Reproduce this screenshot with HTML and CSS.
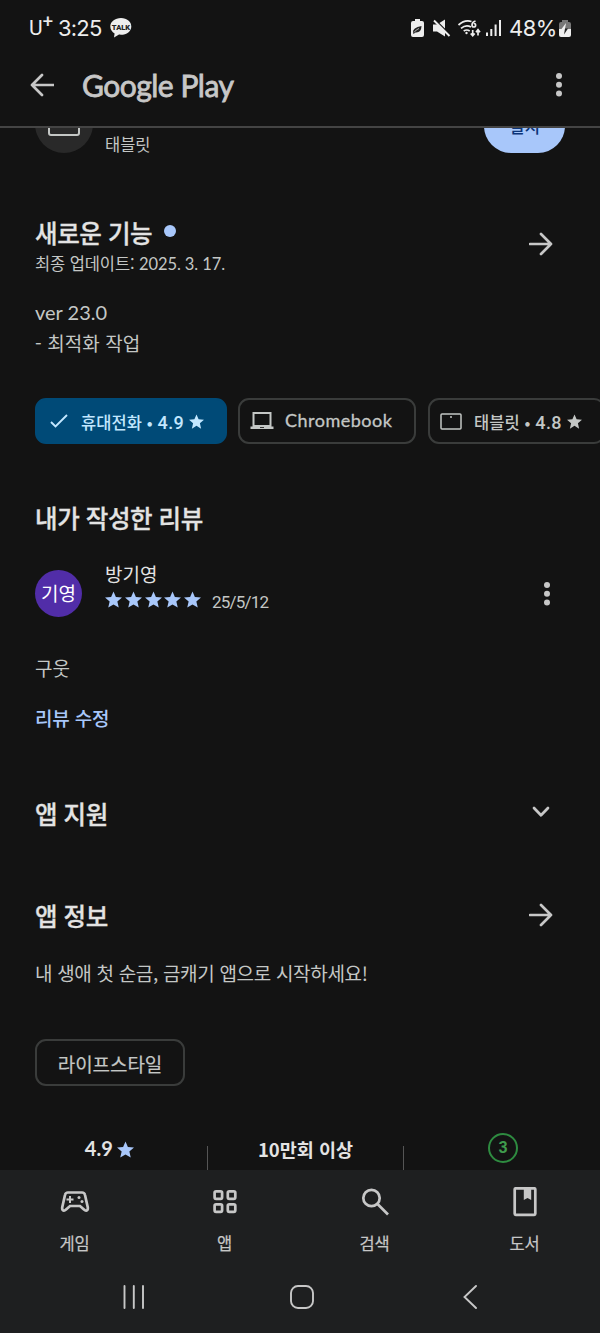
FILE: index.html
```html
<!DOCTYPE html>
<html lang="ko">
<head>
<meta charset="utf-8">
<title>Google Play</title>
<link rel="stylesheet" href="styles.css">
</head>
<body>
<svg width="0" height="0" class="defs"><defs><symbol id="star" viewBox="2 2 20 19"><path d="M12 17.27 18.18 21l-1.64-7.03L22 9.24l-7.19-.61L12 2 9.19 8.63 2 9.24l5.46 4.73L5.82 21z"/></symbol></defs></svg>
<div class="screen">
  <div class="status">
    <span class="carrier">U<sup>+</sup></span><span class="clock">3:25</span>
    <svg class="talk" width="22" height="20" viewBox="0 0 22 20"><path d="M11 0C5 0 .3 3.6.3 8.4c0 3 1.800 5.500 4.300 7L4 19.400l5-2.800c7 .800 12.300-3 12.300-8.200C21.300 3.600 17 0 11 0z" fill="#eee"/><text x="11" y="11.500" text-anchor="middle" class="talk-text">TALK</text></svg>
    <svg class="sys" width="98" height="24" viewBox="410 16 98 24" fill="#ededed">
      <path d="M415 19h5v2h2q2 0 2 2v12q0 2-2 2h-9q-2 0-2-2V23q0-2 2-2h2z"/>
      <path d="M413 32.500q-.5-5 8.500-6.500-.2 7-6 6.500l-2 1.500z" fill="#222"/><path d="M414 32.500q2-3 5-4" fill="none" stroke="#ededed" stroke-width=".7"/>
      <path d="M433 24.500h4l8-5v17l-8-5h-4z"/>
      <path d="M433 18 451 36" stroke="#131313" stroke-width="2"/><path d="m434 20.500 15.500 15.500" stroke="#ededed" stroke-width="1.900"/>
      <g fill="none" stroke="#ededed" stroke-width="1.700"><path d="M458.500 25q6-5.500 13-3.500M461 28.300q5-4 10-1.300M463.700 31q3.200-2 6 0"/><path d="M475.500 21q-3.500 1-3.500 4 0 2 1.800 2t1.800-1.800-1.800-1.700M472.700 30v5.500m-2-2 2 2.300 2-2.300M478 35.500V30m-2 2.200 2-2.500 2 2.500"/></g><circle cx="466.500" cy="33" r="1.200"/>
      <path d="M486 32.500h2V36h-2zM490.300 29h2v7h-2zM494.600 24.500h2V36h-2zM499 20h2v16h-2z"/>
    </svg>
    <span class="percent">48%</span>
    <svg class="battery" width="12" height="18" viewBox="0 0 12 18"><path d="M3 1h6v2h1q2 0 2 2v6H0V5q0-2 2-2h1z" fill="#777"/><path d="M0 10h12v6q0 2-2 2H2q-2 0-2-2z" fill="#eee"/><path d="M7 4 2.500 10H6z" fill="#eee"/><path d="m5 15.500 4-6H6z" fill="#222"/></svg>
  </div>
  <header class="topbar">
    <svg class="ico" width="24" height="24" viewBox="0 0 24 24"><path d="M12 2 2 12l10 10M2 12h21.500"/></svg>
    <h1>Google Play</h1>
    <svg class="dots" width="8" height="26" viewBox="0 0 8 26"><circle cx="4" cy="4" r="3"/><circle cx="4" cy="12.700" r="3"/><circle cx="4" cy="21.400" r="3"/></svg>
  </header>
  <main>
    <div class="device">
      <div class="device-ico"><svg width="32" height="24" viewBox="0 0 32 24"><rect x="1" y="1" width="30" height="22" rx="2" fill="none" stroke="#c4c7c5" stroke-width="2"/></svg></div>
      <span class="device-name">태블릿</span>
      <button class="install">설치</button>
    </div>
    <section class="news">
      <div class="news-head"><h2>새로운 기능</h2><i class="blue-dot"></i><svg class="ico end" width="24" height="24" viewBox="0 0 24 24"><path d="m12 2 10 10-10 10M22 12H1"/></svg></div>
      <p class="updated">최종 업데이트: <span class="lat">2025. 3. 17.</span></p>
      <p class="ver lat">ver 23.0</p>
      <p class="body change">- 최적화 작업</p>
    </section>
    <div class="chips">
      <div class="chip selected"><svg width="18" height="14" viewBox="0 0 18 14"><path d="m1 8 4.500 4.500L17 1" fill="none" stroke="currentColor" stroke-width="1.900"/></svg><span class="chip-label phone">휴대전화 • <b>4.9</b></span><svg class="chip-star" width="15" height="15"><use href="#star"/></svg></div>
      <div class="chip chrome"><svg width="24" height="18" viewBox="0 0 24 18"><path d="M3.500 1h17v13h-17z" fill="none" stroke="currentColor" stroke-width="2"/><path d="M.5 14.500h23V17H.5z" fill="currentColor"/><path d="M10 15h4v1h-4z" fill="#333"/></svg><span class="lat chromebook">Chromebook</span></div>
      <div class="chip tablet"><svg width="22" height="17" viewBox="0 0 22 17"><rect x="1" y="1" width="20" height="15" rx="1" fill="none" stroke="currentColor" stroke-width="1.500"/><circle cx="11" cy="4" r="1" fill="currentColor"/></svg><span class="chip-label tab">태블릿 • <b>4.8</b></span><svg class="chip-star" width="15" height="15"><use href="#star"/></svg></div>
    </div>
    <h2 class="my-review">내가 작성한 리뷰</h2>
    <div class="reviewer">
      <div class="avatar">기영</div>
      <div class="who">
        <div class="name">방기영</div>
        <div class="rating"><svg width="17" height="17"><use href="#star"/></svg><svg width="17" height="17"><use href="#star"/></svg><svg width="17" height="17"><use href="#star"/></svg><svg width="17" height="17"><use href="#star"/></svg><svg width="17" height="17"><use href="#star"/></svg><span class="date">25/5/12</span></div>
      </div>
      <svg class="dots" width="8" height="26" viewBox="0 0 8 26"><circle cx="4" cy="4" r="3"/><circle cx="4" cy="12.700" r="3"/><circle cx="4" cy="21.400" r="3"/></svg>
    </div>
    <p class="body comment">구웃</p>
    <a class="edit">리뷰 수정</a>
    <div class="row support"><h2>앱 지원</h2><svg class="ico chev" width="18" height="12" viewBox="0 0 18 12"><path d="m2 2 7 7.300L16 2"/></svg></div>
    <div class="row about"><h2>앱 정보</h2><svg class="ico" width="24" height="24" viewBox="0 0 24 24"><path d="m12 2 10 10-10 10M22 12H1"/></svg></div>
    <p class="body intro">내 생애 첫 순금, 금캐기 앱으로 시작하세요!</p>
    <div class="tag">라이프스타일</div>
    <div class="stats">
      <div class="stat score"><span class="lat">4.9</span><svg width="17" height="17"><use href="#star"/></svg></div>
      <div class="stat downloads">10만회 이상</div>
      <div class="stat age"><span class="age-badge">3</span></div>
    </div>
  </main>
  <nav class="tabs">
    <div class="tab-item"><svg class="tab-ico" width="30" height="30" viewBox="0 0 30 30"><path d="M8 5.500h14q2.500 0 3 2.500l2.800 12.500q.3 3-1.600 3.200-1 .1-2-1L20 19H10l-4.200 3.700q-1 1.100-2 1-1.900-.2-1.600-3.200L5 8q.5-2.500 3-2.500z"/><path d="M10 9v7M6.500 12.500h7" stroke-width="2"/><circle cx="19" cy="10.500" r="1.500" class="fill"/><circle cx="22" cy="14.500" r="1.500" class="fill"/></svg><span>게임</span></div>
    <div class="tab-item"><svg class="tab-ico" width="30" height="30" viewBox="0 0 30 30"><rect x="4.600" y="4.300" width="7.500" height="7.500" rx="1.500"/><rect x="17.800" y="4.300" width="7.500" height="7.500" rx="1.500"/><rect x="4.600" y="17.300" width="7.500" height="7.500" rx="1.500"/><rect x="17.800" y="17.300" width="7.500" height="7.500" rx="1.500"/></svg><span>앱</span></div>
    <div class="tab-item"><svg class="tab-ico" width="30" height="30" viewBox="0 0 30 30"><circle cx="11.500" cy="11" r="8.200"/><path d="m17.500 17 10.500 10.500"/></svg><span>검색</span></div>
    <div class="tab-item"><svg class="tab-ico" width="30" height="32" viewBox="0 0 30 32"><rect x="4.700" y="1.300" width="20.600" height="26.500" rx="1"/><path d="M13.800 1h7.400v12l-3.700-2-3.700 2z" class="fill"/></svg><span>도서</span></div>
  </nav>
  <div class="system-nav">
    <svg width="24" height="24" viewBox="0 0 24 24"><path d="M2.500 1v22M11.800 1v22M21 1v22"/></svg>
    <svg width="24" height="24" viewBox="0 0 24 24"><rect x="1" y="1" width="22" height="22" rx="7"/></svg>
    <svg width="24" height="24" viewBox="0 0 24 24"><path d="M18 1 6.500 12 18 23"/></svg>
  </div>
</div>
</body>
</html>
```
FILE: styles.css
```css
* { box-sizing: border-box; margin: 0; padding: 0; }
body { background: #131313; color: #e3e3e3; font-family: "Noto Sans CJK KR", sans-serif; }
.defs { position: absolute; }
.screen { width: 600px; height: 1333px; overflow: hidden; display: flex; flex-direction: column; white-space: nowrap; }
.lat { font-family: Lato, sans-serif; }
h2 { font-size: 24.5px; font-weight: 500; line-height: 30px; letter-spacing: -.4px; -webkit-text-stroke: .3px; }
.ico { fill: none; stroke: #c7c7c7; stroke-width: 2.7; stroke-linecap: round; stroke-linejoin: round; }
.dots { fill: #c7c7c7; }

.status { height: 56px; display: flex; align-items: center; padding-left: 29px; font: 22px/24px Inter, sans-serif; color: #ededed; }
.carrier { width: 29px; font-family: Roboto, sans-serif; font-size: 21px; line-height: 24px; }
.carrier sup { font-size: 18px; line-height: 0; vertical-align: 7px; -webkit-text-stroke: .2px; }
.clock { width: 52px; letter-spacing: -0.8px; }
.talk-text { font: 900 7.5px Roboto, sans-serif; fill: #222; }
.sys { margin-left: 278px; }
.percent { width: 50px; margin-left: 1px; letter-spacing: -0.5px; }

.topbar { height: 72px; flex: none; display: flex; align-items: center; padding: 0 37px 12px 30px; border-bottom: 2px solid #444; }
.topbar h1 { margin-left: 28px; flex: 1; font: 400 30px/40px Lato, sans-serif; letter-spacing: -.5px; -webkit-text-stroke: 0.8px #c7c7c7; color: #c7c7c7; }

main { height: 1042px; flex: none; overflow: hidden; padding-left: 35px; }
.device { height: 57px; margin-top: -32px; display: flex; align-items: flex-end; padding-right: 35px; }
.device-ico { width: 58px; height: 58px; border-radius: 50%; background: #292929; display: flex; justify-content: center; padding-top: 17px; }
.device-name { margin-left: 12px; font-size: 16.5px; line-height: 18px; flex: 1; color: #c4c7c5; }
.install { width: 81px; height: 54px; border: 0; border-radius: 27px; background: #a8c7fa; color: #0b3478; font: 500 17px/54px "Noto Sans CJK KR", sans-serif; }
.news-head { display: flex; align-items: center; margin-top: 65px; height: 30px; }
.blue-dot { width: 12px; height: 12px; border-radius: 50%; background: #a8c7fa; margin: 0 0 4px 12px; }
.end { margin-left: auto; margin-right: 47px; transform: translateY(11px); }
.updated { font-size: 16.5px; line-height: 20px; margin-top: 5px; letter-spacing: -.1px; color: #c4c7c5; }
.ver { font-size: 20px; line-height: 30px; margin-top: 23px; color: #c4c7c5; }
.body { font-size: 19px; line-height: 30px; letter-spacing: -.1px; color: #c4c7c5; }
.change { letter-spacing: .1px; margin-top: 1px; }
.chips { display: flex; gap: 12px; margin-top: 40px; width: 640px; }
.chip { height: 46px; border: 2px solid #3a3c3b; border-radius: 11px; display: flex; align-items: center; color: #c4c7c5; flex: none; }
.chip b { font: 500 18px Roboto, sans-serif; letter-spacing: .4px; }
.chip-label { font-size: 16.5px; font-weight: 500; line-height: 24px; letter-spacing: .1px; padding-top: 2px; }
.chip-star { margin-left: 5px; fill: currentColor; }
.selected { width: 192px; background: #004a77; border-color: #004a77; color: #c2e7ff; padding-left: 13px; }
.phone { margin-left: 13px; }
.chrome { width: 178px; margin-left: -1px; padding-left: 10px; }
.chromebook { margin: 0 0 2px 11px; font-size: 18px; letter-spacing: .5px; -webkit-text-stroke: .3px; }
.tablet { width: 177px; padding-left: 10px; }
.tab { margin-left: 12px; }
.my-review { margin-top: 59px; }
.reviewer { display: flex; height: 55px; margin-top: 30px; padding-right: 49px; align-items: flex-end; }
.avatar { width: 47px; height: 47px; border-radius: 50%; background: #512da8; color: #fff; font-size: 19px; line-height: 45px; text-align: center; margin-bottom: 1px; }
.who { margin-left: 23px; flex: 1; align-self: flex-start; }
.name { font-size: 19px; line-height: 22px; }
.rating { display: flex; align-items: center; gap: 2.8px; fill: #a8c7fa; height: 28px; }
.date { font: 17px/22px Roboto, sans-serif; letter-spacing: -.8px; margin: 5px 0 0 8px; color: #c4c7c5; }
.reviewer .dots { margin-bottom: 11px; }
.comment { margin-top: 35px; }
.edit { display: block; font-size: 19px; font-weight: 500; line-height: 30px; margin-top: 20px; letter-spacing: -.2px; color: #a8c7fa; }
.row { display: flex; align-items: center; justify-content: space-between; padding-right: 47px; height: 30px; }
.support { margin-top: 66px; }
.chev { margin: 0 3px 5px 0; }
.about { margin-top: 72px; }
.about .ico { margin-bottom: 2px; }
.intro { margin-top: 27px; letter-spacing: -.32px; }
.tag { width: 150px; height: 47px; border: 2px solid #3a3c3b; border-radius: 11px; margin-top: 51px; text-align: center; font-size: 19px; line-height: 45px; color: #c4c7c5; letter-spacing: -.1px; -webkit-text-stroke: .2px; }
.stats { display: flex; height: 60px; margin: 37px 0 0 -25px; }
.stat { height: 50px; display: flex; justify-content: center; font-size: 18px; font-weight: 700; line-height: 24px; padding-top: 13px; width: 197px; }
.score { font-size: 20px; gap: 4px; padding-left: 2px; fill: #a8c7fa; }
.score svg { margin-top: 5px; }
.downloads, .age { border-left: 1px solid #555; margin-top: 23px; height: 27px; padding-top: 0; }
.downloads { line-height: 6px; font-size: 18.5px; }
.age-badge { width: 30px; height: 30px; margin: -13px 0 0 2px; border: 2px solid #2e8b40; border-radius: 50%; color: #3f9c4d; font: 700 16px/26px Roboto, sans-serif; text-align: center; }

.tabs { height: 100px; flex: none; background: #1e1f20; display: flex; }
.tab-item { flex: 1; display: flex; flex-direction: column; align-items: center; padding-top: 17px; color: #c7c7c7; font-size: 16.5px; line-height: 24px; letter-spacing: -.2px; -webkit-text-stroke: .2px; }
.tab-item span { margin-top: auto; margin-bottom: 15px; padding-right: 1px; }
.tab-ico { fill: none; stroke: #c7c7c7; stroke-width: 2.7; }
.tab-ico .fill { fill: #c7c7c7; stroke: none; }
.system-nav { height: 63px; flex: none; background: #1e1f20; display: flex; justify-content: space-between; padding: 15px 118px 0 122px; }
.system-nav svg { fill: none; stroke: #c7c7c7; stroke-width: 1.9; stroke-linecap: round; }
```
